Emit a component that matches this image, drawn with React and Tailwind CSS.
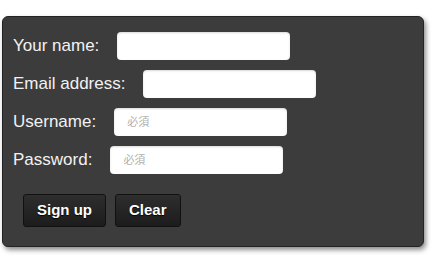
import React from 'react'

function Field({ label, placeholder, type = "text" }) {
	return (
		<div className="flex items-center gap-[18px] h-[28px]">
			<label className="text-[17px] text-[#f2f2f2]">{label}</label>
			<input
				type={type}
				placeholder={placeholder}
				className="w-[173px] h-[28px] rounded-[4px] bg-white px-[13px] text-[11px] outline-none placeholder:text-[#b0b0b0] shadow-[inset_0_1px_2px_rgba(0,0,0,0.15)]"
			/>
		</div>
	);
}

export default function App() {
	return (
		<div className="w-[438px] h-[256px] bg-white pt-[16px] pl-[2px] font-['Liberation_Sans','Noto_Sans_CJK_JP',sans-serif]">
			{/* panel */}
			<div className="w-[422px] h-[231px] bg-[#3c3c3c] border border-[#242424] rounded-[6px] shadow-[2px_3px_5px_rgba(0,0,0,0.45)] pt-[15px] pl-[10px]">
				<form className="flex flex-col gap-[10px]">
					<Field label="Your name:" />
					<Field label="Email address:" type="email" />
					<Field label="Username:" placeholder="必須" />
					<Field label="Password:" placeholder="必須" type="password" />

					<div className="flex gap-[9px] mt-[10px] ml-[10px]">
						<button
							type="submit"
							className="h-[33px] px-[13px] rounded-[3px] border border-[#111] bg-gradient-to-b from-[#2e2e2e] to-[#1c1c1c] text-white font-bold text-[15px] [text-shadow:0_1px_1px_rgba(0,0,0,0.9)]">
							Sign up
						</button>
						<button
							type="reset"
							className="h-[33px] px-[13px] rounded-[3px] border border-[#111] bg-gradient-to-b from-[#2e2e2e] to-[#1c1c1c] text-white font-bold text-[15px] [text-shadow:0_1px_1px_rgba(0,0,0,0.9)]">
							Clear
						</button>
					</div>
				</form>
			</div>
		</div>
	);
}
